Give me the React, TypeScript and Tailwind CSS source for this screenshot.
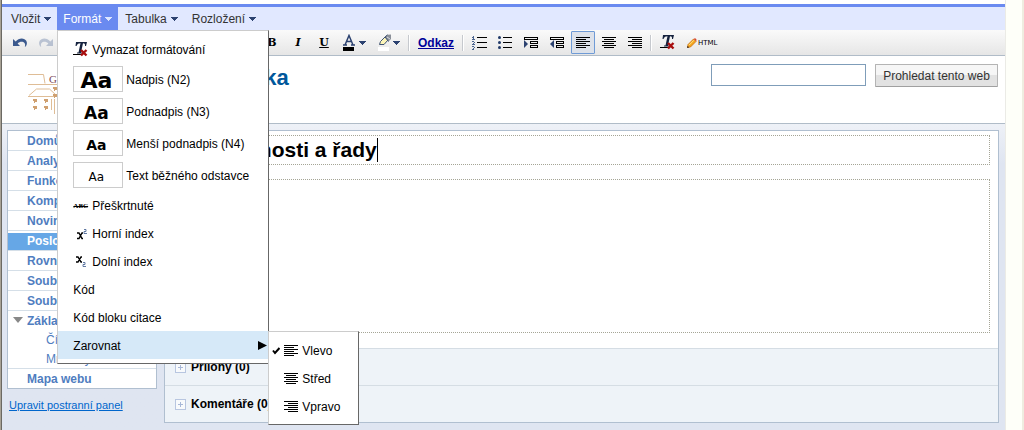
import React from 'react';

const toolButton = 'flex h-[23px] w-[26px] items-center justify-center';
const letterButton = `${toolButton} font-['DejaVu_Serif',serif] text-[11px] font-bold`;
const menuRow = 'flex h-7 w-full items-center gap-[3px] pt-[1px] pl-[15px] text-left';

const pages = ['Domů', 'Analytická', 'Funkce', 'Komplexní', 'Novinky', 'Posloupnosti', 'Rovnice', 'Soubory', 'Soubory'];

const headings = [
  { label: 'Nadpis (N2)', sample: 'text-[22px] font-bold' },
  { label: 'Podnadpis (N3)', sample: 'text-[17px] font-bold' },
  { label: 'Menší podnadpis (N4)', sample: 'text-[14px] font-bold' },
  { label: 'Text běžného odstavce', sample: 'text-[12px]' },
];

const DownArrow = ({ className = 'fill-[#2c4270]' }: { className?: string }) => (
  <svg width="7" height="4" shapeRendering="crispEdges" className={className}>
    <path d="M0 0h7v1H0zM1 1h5v1H1zM2 2h3v1H2zM3 3h1v1H3z" />
  </svg>
);

const linePaths = {
  left: 'M0 0h14v1H0zM0 2h10v1H0zM0 4h14v1H0zM0 6h10v1H0zM0 8h14v1H0zM0 10h10v1H0z',
  center: 'M0 0h14v1H0zM2 2h10v1H2zM0 4h14v1H0zM2 6h10v1H2zM0 8h14v1H0zM2 10h10v1H2z',
  right: 'M0 0h14v1H0zM4 2h10v1H4zM0 4h14v1H0zM4 6h10v1H4zM0 8h14v1H0zM4 10h10v1H4z',
};

const AlignIcon = ({ kind }: { kind: keyof typeof linePaths }) => (
  <svg width="14" height="11" shapeRendering="crispEdges" className="shrink-0">
    <path d={linePaths[kind]} />
  </svg>
);

const UndoIcon = ({ className = '' }: { className?: string }) => (
  <svg width="14" height="9" className={className}>
    <path d="M0 1v7h7L4.600 5.600C6.500 3.400 10 3 11.500 5c.8 1 .8 2.300.3 3.500h1C14.800 5.500 14 2.400 11.500 1.200 8.500-.2 5 .8 2.700 3.600z" fill="#3c5a8e" />
  </svg>
);

const ClearIcon = () => (
  <svg width="15" height="15" className="shrink-0">
    <path d="M3 0h11l-1 4h-1c.2-2-.3-2.700-2-2.700L8 10.500h2v1H4v-1h1.500L7.500 1.300C5.500 1.300 4.300 2 3.500 4h-1z" fill="#16233f" />
    <path d="M0 12h8v1H0z" />
    <path d="M8 8l5.500 5.500M13.500 8L8 13.500" stroke="#a80d0d" strokeWidth="2.400" />
  </svg>
);

const NumberedIcon = () => (
  <svg width="15" height="14" shapeRendering="crispEdges">
    <path d="M5 1h10v1H5zM5 6h10v1H5zM5 11h10v1H5z" />
    <path d="M1 0h1v4H1zM0 1h1v1H0zM0 3h3v1H0zM0 5h2v1H0zM2 6h1v1H2zM1 7h1v1H1zM0 8h3v1H0zM0 10h2v1H0zM2 11h1v1H2zM1 12h1v1H1zM0 13h2v1H0z" fill="#4a648f" />
  </svg>
);

const BulletIcon = () => (
  <svg width="14" height="13">
    <path d="M5 1h9v1H5zM5 6h9v1H5zM5 11h9v1H5z" shapeRendering="crispEdges" />
    <g fill="#203a68">
      <circle cx="1.500" cy="1.500" r="1.500" />
      <circle cx="1.500" cy="6.500" r="1.500" />
      <circle cx="1.500" cy="11.500" r="1.500" />
    </g>
  </svg>
);

const IndentIcon = ({ out = false }: { out?: boolean }) => (
  <svg width="14" height="11">
    <path d="M.5.5h13v2H.5zM6.500 4.500h7v2h-7zM6.500 8.500h7v2h-7z" fill="none" stroke="#000" shapeRendering="crispEdges" />
    <path d={out ? 'M4 3v8L0 7z' : 'M0 3v8l4-4z'} fill="#2c4270" />
  </svg>
);

const PencilIcon = () => (
  <svg width="10" height="10">
    <path d="M1 6.500L6.500 1l2.500 2.500L3.500 9 .5 9.500z" fill="#f5a51c" stroke="#c06a10" strokeWidth=".7" />
    <path d="M2 7.200l5-5" stroke="#ffe58a" />
    <path d="M6.500.8l2.700 2.700.3-2L8.300.3z" fill="#d8452c" />
    <path d="M0 10l.6-2.200 1.600 1.600z" fill="#403020" />
  </svg>
);

const HighlightIcon = () => (
  <svg width="14" height="17">
    <path d="M1.500 10.500l1-3L7 3l3 3-4 4.500z" fill="#fdf6b8" stroke="#3f5272" />
    <path d="M7 3L9.500.8 13 .5V5l-2.500 2.500z" fill="#8a8f99" />
    <path d="M7 3L9.500.8M10.500 7.500L7 3" stroke="#3f5272" fill="none" />
    <path d="M9 3l3 2" stroke="#d5dae2" />
    <path d="M0 13h11v4H0z" fill="#fff" />
  </svg>
);

const Logo = () => (
  <svg width="80" height="42" fill="none" stroke="#dfbd96">
    <path d="M0 2.500h15.500l1.500 9M0 12.500h30M0 24.500h30" />
    <path d="M1 23.500l7.500-6.500h13l7 6.500M23.500 27v11M26.500 27v15" />
    <path d="M5 27h4v3H7v1H6v-2H5zM16 27h4v3h-2v1h-1v-2h-1zM5 34h4v3H7v1H6v-2H5zM16 34h4v3h-2v1h-1v-2h-1zM25 15h4v3h-2v1h-1v-2h-1zM25 22h4v3h-2v1h-1v-2h-1z" fill="#cfa070" stroke="none" />
    <text x="21" y="11" fill="#7d4a58" stroke="none" fontSize="11" fontFamily="Liberation Serif, serif">G</text>
  </svg>
);

const Separator = () => <span className="mx-[2px] h-4 w-[2px] border-l border-r border-l-[#c6c9ce] border-r-white" />;

const AlignMenu = () => (
  <ul className="absolute top-0 left-full z-20 w-[91px] border border-t-[#ccc] border-r-[#676767] border-b-[#676767] border-l-[#ccc] bg-white py-1">
    {([['left', 'Vlevo'], ['center', 'Střed'], ['right', 'Vpravo']] as const).map(([kind, label]) => (
      <li key={kind}>
        <button className="flex h-7 w-full items-center gap-1 pt-[1px] pl-[3px] text-left">
          <svg width="8" height="8" className="shrink-0">
            {kind === 'left' && <path d="M1 3.500l2 2.500L7.500 1" fill="none" stroke="#000" strokeWidth="2" />}
          </svg>
          <AlignIcon kind={kind} />
          {label}
        </button>
      </li>
    ))}
  </ul>
);

const FormatMenu = () => (
  <ul className="absolute top-full left-0 z-10 w-[212px] border border-t-[#ccc] border-r-[#676767] border-b-[#676767] border-l-[#ccc] bg-white py-1 text-black">
    <li>
      <button className={menuRow}>
        <span className="w-4"><ClearIcon /></span>
        Vymazat formátování
      </button>
    </li>
    {headings.map((heading) => (
      <li key={heading.label}>
        <button className="flex h-8 w-full items-center gap-[3px] pl-[15px] text-left">
          <span className="flex h-[26px] w-[50px] items-center justify-center border border-[#ccc] pt-1 pr-1 font-['DejaVu_Sans',sans-serif] leading-none">
            <span className={heading.sample}>Aa</span>
          </span>
          <span className="pt-[2px]">{heading.label}</span>
        </button>
      </li>
    ))}
    <li>
      <button className={menuRow}>
        <span className="w-4 font-['Liberation_Serif',serif] text-[7px] font-bold line-through">ABC</span>
        Přeškrtnuté
      </button>
    </li>
    <li>
      <button className={menuRow}>
        <svg width="16" height="12">
          <path d="M4 5h2l3 5.500h1M4 10.500h2L9 5h1" fill="none" stroke="#000" strokeWidth="1.400" />
          <path d="M11 1.500h2v2h-2v2h3" fill="none" stroke="#3c5a8e" strokeWidth=".8" />
        </svg>
        Horní index
      </button>
    </li>
    <li>
      <button className={menuRow}>
        <svg width="16" height="12">
          <path d="M3 1h2l3 5h1M3 6h2l3-5h1" fill="none" stroke="#000" strokeWidth="1.400" />
          <path d="M10 6.500h2v2h-2v2h3" fill="none" stroke="#3c5a8e" strokeWidth=".8" />
        </svg>
        Dolní index
      </button>
    </li>
    <li><button className={menuRow}>Kód</button></li>
    <li><button className={menuRow}>Kód bloku citace</button></li>
    <li className="relative bg-[#d6e9f8]">
      <button className={`${menuRow} justify-between pr-[1px]`}>
        Zarovnat
        <svg width="9" height="9"><path d="M0 0v9l9-4.500z" /></svg>
      </button>
      <AlignMenu />
    </li>
  </ul>
);

const MenuBar = () => (
  <nav className="flex h-[26px] border-t-[3px] border-[#6a8af0] bg-[#e1e8ff] pl-[3px] text-[#333]">
    <button className="flex items-center gap-1 px-1.5">Vložit <DownArrow /></button>
    <div className="relative">
      <button className="flex h-full items-center gap-1 bg-[#6a8af0] px-1.5 text-white">
        Formát <DownArrow className="fill-[#dde6ff]" />
      </button>
      <FormatMenu />
    </div>
    <button className="flex items-center gap-1 px-[7px]">Tabulka <DownArrow /></button>
    <button className="flex items-center gap-1 px-[7px]">Rozložení <DownArrow /></button>
  </nav>
);

const Toolbar = () => (
  <div className="flex h-[26px] items-center border-b border-[#b0bcc8] bg-linear-to-b from-[#fafafa] to-[#e6e6e6] pl-[5px]">
    <button aria-label="Zpět" className={toolButton}><UndoIcon /></button>
    <button aria-label="Znovu" className={toolButton}><UndoIcon className="-scale-x-100 opacity-30" /></button>
    <select aria-label="Písmo" className="w-[120px] bg-transparent"><option>Normální</option></select>
    <select aria-label="Velikost" className="w-20 bg-transparent"><option>10 b.</option></select>
    <button className={letterButton}>B</button>
    <button className={`${letterButton} italic`}>I</button>
    <button className={`${letterButton} underline`}>U</button>
    <button aria-label="Barva textu" className="flex h-[23px] w-[35px] items-center justify-center gap-1">
      <svg width="12" height="17">
        <path d="M0 11h4M8 11h4M2 11L6 1.500 10 11M3.500 7.500h5" fill="none" stroke="#2c4270" strokeWidth="1.500" />
        <path d="M0 13h11v4H0z" />
      </svg>
      <DownArrow />
    </button>
    <button aria-label="Barva zvýraznění" className="flex h-[23px] w-[34px] items-center justify-center gap-[1px]">
      <HighlightIcon />
      <DownArrow />
    </button>
    <Separator />
    <button className="w-12 font-bold text-[#000099] underline">Odkaz</button>
    <Separator />
    <button aria-label="Číslovaný seznam" className={toolButton}><NumberedIcon /></button>
    <button aria-label="Seznam s odrážkami" className={toolButton}><BulletIcon /></button>
    <button aria-label="Zvětšit odsazení" className={toolButton}><IndentIcon /></button>
    <button aria-label="Zmenšit odsazení" className={toolButton}><IndentIcon out /></button>
    <button aria-label="Vlevo" className="mx-[1px] flex h-[23px] w-6 items-center justify-center rounded-[1px] border border-[#6f9bd6] bg-[#dde2ea]">
      <AlignIcon kind="left" />
    </button>
    <button aria-label="Střed" className={toolButton}><AlignIcon kind="center" /></button>
    <button aria-label="Vpravo" className={toolButton}><AlignIcon kind="right" /></button>
    <Separator />
    <button aria-label="Vymazat formátování" className={toolButton}><ClearIcon /></button>
    <button className="flex items-center gap-[1px] pl-[7px] font-['DejaVu_Sans',sans-serif] text-[7px]">
      <PencilIcon /> HTML
    </button>
  </div>
);

const Header = () => (
  <header className="flex h-[68px] items-start justify-between border-b border-[#b0bcc8] pt-2 pr-[7px] pl-[26px]">
    <div className="flex items-start gap-[61px]">
      <div className="pt-2"><Logo /></div>
      <h1 className="text-[22px] leading-7 font-bold text-[#00579b]">Matematika</h1>
    </div>
    <form className="flex items-start gap-[9px]" onSubmit={(e) => e.preventDefault()}>
      <input aria-label="Hledat" type="text" className="h-[22px] w-[155px] border border-[#7f9db9] bg-white px-1" />
      <button className="h-[23px] w-[123px] rounded-[1px] border border-[#b4b4b4] border-b-[#a0a0a0] bg-linear-to-b from-[#f6f6f6] from-45% to-[#e2e2e2] to-50% text-[#333]">
        Prohledat tento web
      </button>
    </form>
  </header>
);

const Sidebar = () => (
  <aside className="w-[150px] shrink-0">
    <ul className="divide-y divide-[#d5dfe8] border border-[#b0bfd0] bg-white leading-[17px] text-[#4f7dc0]">
      {pages.map((page, index) => (
        <li key={index} className="pt-[2px]">
          <a
            href="#"
            className={page === 'Posloupnosti' ? 'block bg-[#66a7e6] pl-[19px] font-bold text-white' : 'block pl-[19px] font-bold'}
          >
            {page}
          </a>
        </li>
      ))}
      <li className="pt-[2px]">
        <div className="flex items-center gap-1 pl-[5px]">
          <svg width="10" height="10"><path d="M0 0h10L5 6z" fill="#888" /></svg>
          <a href="#" className="font-bold">Základy</a>
        </div>
        <a href="#" className="block pt-[2px] pl-[38px]">Čísla</a>
        <a href="#" className="block pt-[2px] pl-[38px]">Množiny</a>
      </li>
      <li className="pt-[2px]"><a href="#" className="block pl-[19px] font-bold">Mapa webu</a></li>
    </ul>
    <a href="#" className="mt-2 ml-[2px] block text-[11px] leading-4 text-[#0066cc] underline">Upravit postranní panel</a>
  </aside>
);

const Section = ({ title }: { title: string }) => (
  <button className="flex h-[37px] w-full items-center gap-[5px] border-t border-[#d5dde4] bg-[#eef3f8] pl-[10px] font-bold text-black">
    <svg width="11" height="11" fill="none" shapeRendering="crispEdges">
      <path d="M.5.5h10v10H.5z" fill="#f8fafc" stroke="#b8c6e0" />
      <path d="M3 5.500h5M5.500 3v5" stroke="#a8b8d8" />
    </svg>
    {title}
  </button>
);

const Editor = () => (
  <main className="min-w-0 flex-1 border border-[#b0bfd0] bg-white">
    <div className="px-2 pt-1 pb-[15px]">
      <div className="flex h-[30px] items-center border border-dotted border-[#a5a596] pl-[2px]">
        <input
          aria-label="Název stránky"
          defaultValue="Posloupnosti a řady"
          className="[field-sizing:content] text-[21px] leading-7 font-bold text-black outline-none"
        />
        <span className="h-6 w-px bg-black" />
      </div>
      <textarea aria-label="Obsah stránky" className="mt-[14px] block h-[154px] w-full resize-none border border-dotted border-[#a5a596] outline-none" />
    </div>
    <Section title="Přílohy (0)" />
    <Section title="Komentáře (0)" />
  </main>
);

const App: React.FC = () => {
  return (
    <div className="flex min-h-screen bg-[#fefff9] font-['Liberation_Sans',Arial,sans-serif] text-[12px] leading-4">
      <div className="w-[2px] shrink-0 border-r border-[#6b6963] bg-[#a8a296]"></div>
      <div className="flex min-w-0 flex-1 flex-col bg-white pt-1">
        <MenuBar />
        <Toolbar />
        <Header />
        <div className="flex flex-1 items-start gap-[7px] bg-linear-to-b from-[#eef1f7] to-[#dfe5f1] to-[40px] pt-[6px] pr-[6px] pb-[7px] pl-[5px]">
          <Sidebar />
          <Editor />
        </div>
      </div>
      <div className="w-[17px] shrink-0 border-l border-[#ebebe6]"></div>
      <div className="w-[2px] shrink-0 bg-[#efece0]"></div>
    </div>
  );
};

export default App;
